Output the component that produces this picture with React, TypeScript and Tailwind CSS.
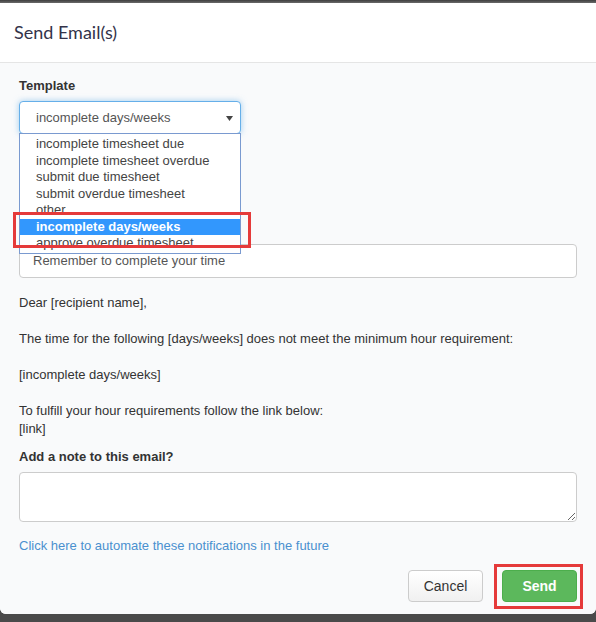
import React from "react";

const items = [
  "incomplete timesheet due",
  "incomplete timesheet overdue",
  "submit due timesheet",
  "submit overdue timesheet",
  "other",
  "incomplete days/weeks",
  "approve overdue timesheet",
];

export default function App() {
  return (
    <div
      className="w-[596px] h-[622px] flex flex-col bg-[#4a4a4a] overflow-hidden"
      style={{ fontFamily: '"Liberation Sans", Arial, sans-serif' }}
    >
      <div className="h-[3px] bg-gradient-to-b from-[#3f3f3f] to-[#6a6a6a]" />
      <div className="flex-1 flex flex-col bg-white rounded-b-[6px] overflow-hidden">
        <div className="h-[60px] border-b border-[#e5e5e5] flex items-center px-[14px] bg-white">
          <h1
            className="text-[18px] leading-[20px] text-[#33334a] pb-[1px]"
            style={{ fontFamily: 'Lato, "Open Sans", sans-serif' }}
          >
            Send Email(s)
          </h1>
        </div>
        <div className="flex-1 flex flex-col bg-[#f9fafb] px-[19px] pt-[14px] text-[13px] text-[#333]">
          <div className="font-bold leading-[18px]">Template</div>
          <div className="relative mt-[6px] h-[33px] w-[222px]">
            <div className="h-[33px] rounded-[4px] border border-[#66afe9] bg-white shadow-[0_0_6px_rgba(102,175,233,0.6)] flex items-center pl-[16px] pr-[7px] text-[#555]">
              <span className="flex-1 leading-[18px]">incomplete days/weeks</span>
              <svg width="7" height="5" viewBox="0 0 7 5" className="mt-[1px]">
                <path d="M0 0 L7 0 L3.5 5 Z" fill="#444" />
              </svg>
            </div>
            <div className="absolute left-0 top-[32px] w-[222px] h-[121px] border border-[#7a9ad0] bg-white overflow-hidden pt-[2px] z-10">
              {items.map((t) => {
                const sel = t === "incomplete days/weeks";
                return (
                  <div
                    key={t}
                    className={
                      sel
                        ? "h-[16.5px] leading-[16.5px] pl-[16px] bg-[#3297fd] text-white font-bold whitespace-nowrap"
                        : "h-[16.5px] leading-[16.5px] pl-[16px] text-[#444] whitespace-nowrap"
                    }
                  >
                    {t}
                  </div>
                );
              })}
            </div>
            <div className="absolute left-[-6px] top-[111px] w-[238px] h-[36px] border-[3px] border-[#e53a3a] z-20 pointer-events-none" />
          </div>
          <div className="mt-[110px] h-[34px] rounded-[4px] border border-[#ccc] bg-white flex items-center pl-[13px] text-[#555] leading-[18px]">
            Remember to complete your time
          </div>
          <p className="mt-[16px] leading-[18px]">Dear [recipient name],</p>
          <p className="mt-[18px] leading-[18px]">
            The time for the following [days/weeks] does not meet the minimum hour requirement:
          </p>
          <p className="mt-[18px] leading-[18px]">[incomplete days/weeks]</p>
          <p className="mt-[18px] leading-[18px]">
            To fulfill your hour requirements follow the link below:
            <br />
            [link]
          </p>
          <div className="mt-[10px] font-bold leading-[18px]">Add a note to this email?</div>
          <textarea
            className="mt-[6px] h-[50px] w-full rounded-[4px] border border-[#ccc] bg-white block"
            readOnly
          />
          <a className="mt-[15px] leading-[18px] text-[#4a90cf] cursor-pointer">
            Click here to automate these notifications in the future
          </a>
          <div className="mt-[15px] flex justify-end gap-[19px]">
            <button className="w-[75px] h-[32px] rounded-[4px] border border-[#ccc] bg-gradient-to-b from-white to-[#f0f0f0] text-[14px] text-[#333]">
              Cancel
            </button>
            <div className="relative">
              <button className="w-[75px] h-[32px] rounded-[4px] border border-[#4cae4c] bg-[#5cb85c] text-[14px] font-bold text-white">
                Send
              </button>
              <div className="absolute left-[-8px] right-[-6px] top-[-6px] bottom-[-7px] border-[3px] border-[#e53a3a] pointer-events-none" />
            </div>
          </div>
        </div>
      </div>
      <div className="h-[8px]" />
    </div>
  );
}
